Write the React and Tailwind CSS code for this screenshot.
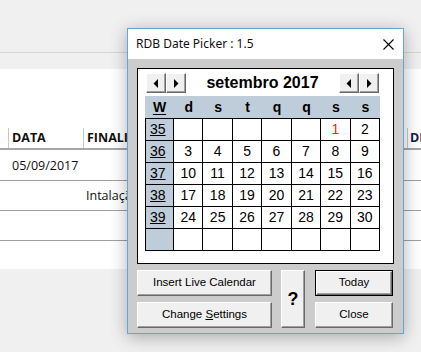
import React from "react";

const TAHOMA = { fontFamily: '"Liberation Sans", Arial, sans-serif' };

function Tri({ dir }) {
  return (
    <svg width="6" height="9" viewBox="0 0 6 9">
      {dir === "l" ? <path d="M5 0 L5 9 L0.5 4.5 Z" fill="#000" /> : <path d="M1 0 L1 9 L5.5 4.5 Z" fill="#000" />}
    </svg>
  );
}

function NavBtn({ dir }) {
  return (
    <div className="w-[20px] h-[20px] flex items-center justify-center bg-[#f0f0f0] border border-t-white border-l-white border-r-[#696969] border-b-[#696969] shadow-[inset_-1px_-1px_0_#a0a0a0]">
      <Tri dir={dir} />
    </div>
  );
}

function Btn({ children, className = "", def = false }) {
  const inner = (
    <div className="w-full h-full flex items-center justify-center bg-[#f0f0f0] border border-t-white border-l-white border-r-[#696969] border-b-[#696969] shadow-[inset_-1px_-1px_0_#a0a0a0] text-[11.5px] text-black">
      {children}
    </div>
  );
  return (
    <div className={`${className} ${def ? "border border-black" : ""}`}>{inner}</div>
  );
}

const weeks = [
  ["35", ["", "", "", "", "", "1", "2"]],
  ["36", ["3", "4", "5", "6", "7", "8", "9"]],
  ["37", ["10", "11", "12", "13", "14", "15", "16"]],
  ["38", ["17", "18", "19", "20", "21", "22", "23"]],
  ["39", ["24", "25", "26", "27", "28", "29", "30"]],
  ["", ["", "", "", "", "", "", ""]],
];

export default function App() {
  return (
    <div
      className="relative w-[421px] h-[352px] overflow-hidden bg-[#f0f0f0]"
      style={{ fontFamily: '"Open Sans", "Noto Sans", Arial, sans-serif' }}
    >
      {/* background page */}
      <div className="h-[53px] border-b border-[#d6d6d6] bg-[#f0f0f0]" />
      <div className="h-[16px] bg-[#f0f0f0]" />
      <div className="h-[200px] bg-white pt-[59px] text-[12.5px] text-[#111]">
        <div className="flex h-[22px] border-b-2 border-[#a6a6a6] font-bold">
          <div className="w-[8px] shrink-0" />
          <div className="w-[75px] shrink-0 border-l border-[#c8c8c8] pl-[3px] leading-[20px]">DATA</div>
          <div className="w-[324px] shrink-0 border-l border-[#c8c8c8] pl-[3px] leading-[20px]">
            <div className="w-[40px] overflow-hidden whitespace-nowrap">FINALIDADE</div>
          </div>
          <div className="flex-1 border-l border-[#c8c8c8] pl-[2px] leading-[20px] overflow-hidden whitespace-nowrap text-[#10204a]">DI</div>
        </div>
        <div className="flex h-[31px] border-b border-[#a0a0a0] items-center">
          <div className="pl-[12px] pt-[2px]">05/09/2017</div>
        </div>
        <div className="flex h-[30px] border-b border-[#a0a0a0] items-center">
          <div className="ml-[86px] w-[41px] pt-[2px] whitespace-nowrap overflow-hidden">Intalação</div>
        </div>
        <div className="h-[30px] border-b border-[#a0a0a0]" />
      </div>

      {/* dialog window */}
      <div className="absolute left-[127px] top-[28px] w-[277px] h-[306px] border border-[#5fa9d6] bg-[#cccccc] shadow-[0_3px_16px_rgba(0,0,0,0.3)] flex flex-col">
        <div className="h-[30px] bg-white flex items-center justify-between pl-[8px] pr-[9px] shrink-0">
          <span className="text-[12px] text-[#111]" style={{ fontFamily: '"Noto Sans", "Open Sans", sans-serif' }}>
            RDB Date Picker : 1.5
          </span>
          <svg width="11" height="11" viewBox="0 0 11 11">
            <path d="M0.5 0.5 L10.5 10.5 M10.5 0.5 L0.5 10.5" stroke="#000" strokeWidth="1.1" />
          </svg>
        </div>
        <div className="flex-1 pl-[9px] pt-[9px]" style={TAHOMA}>
          <div className="w-[257px] h-[196px] bg-white border border-black">
            <div className="ml-[8px] mt-[4px] w-[233px] h-[20px] flex items-center justify-between">
              <div className="flex">
                <NavBtn dir="l" />
                <NavBtn dir="r" />
              </div>
              <div className="text-[16px] font-bold text-black leading-none">setembro 2017</div>
              <div className="flex">
                <NavBtn dir="l" />
                <NavBtn dir="r" />
              </div>
            </div>
            <div className="ml-[7px] mt-[3px] w-[235px]">
              <div className="grid grid-cols-[29px_repeat(7,1fr)] h-[22px] bg-[#bfcddb] text-[14px] font-bold text-black items-center text-center">
                <span className="underline underline-offset-2">W</span>
                <span>d</span>
                <span>s</span>
                <span>t</span>
                <span>q</span>
                <span>q</span>
                <span>s</span>
                <span>s</span>
              </div>
              <div className="border-l border-t border-black">
                {weeks.map(([w, days], i) => (
                  <div key={i} className="grid grid-cols-[28px_repeat(7,1fr)] h-[22px]">
                    <div className="bg-[#bfcddb] border-r border-b border-black text-[14px] pl-[4px] leading-[21px] text-black">
                      <span className="underline underline-offset-1">{w}</span>
                    </div>
                    {days.map((d, j) => (
                      <div
                        key={j}
                        className={`border-r border-b border-black text-[14px] text-center leading-[21px] ${d === "1" ? "text-[#e4300f]" : "text-black"}`}
                      >
                        {d}
                      </div>
                    ))}
                  </div>
                ))}
              </div>
            </div>
          </div>
          <div className="mt-[6px] flex w-[256px]">
            <div className="w-[135px] flex flex-col gap-[6px]">
              <Btn className="h-[26px]">Insert Live Calendar</Btn>
              <Btn className="h-[26px]">
                <span>
                  Change <span className="underline">S</span>ettings
                </span>
              </Btn>
            </div>
            <Btn className="ml-[9px] w-[24px] h-[58px]">
              <span className="text-[18px] font-bold">?</span>
            </Btn>
            <div className="ml-[10px] w-[78px] flex flex-col gap-[6px]">
              <Btn className="h-[26px]" def>Today</Btn>
              <Btn className="h-[26px]">Close</Btn>
            </div>
          </div>
        </div>
      </div>
    </div>
  );
}
